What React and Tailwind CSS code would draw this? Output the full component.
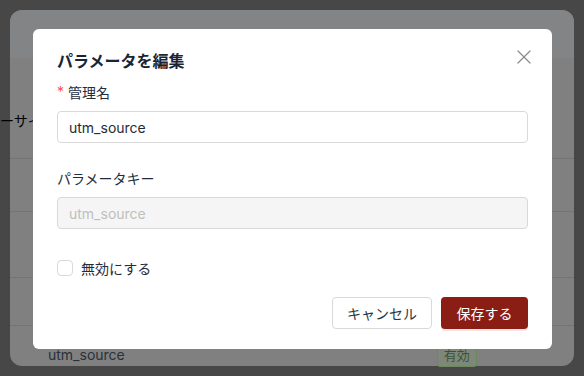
import { X } from "lucide-react"

const font = { fontFamily: "Inter, 'Noto Sans CJK JP', sans-serif" }

function Field({ label, required, value, disabled }) {
  return (
    <div className="flex flex-col">
      <label className="flex items-center h-[22px] text-[14px] text-[#1f2d3d]">
        {required && <span className="text-[#ff4d4f] mr-1 text-[14px] leading-none">*</span>}
        {label}
      </label>
      <div
        className={
          "mt-2 h-[32px] rounded-[4px] border border-[#d9d9d9] px-[11px] flex items-center text-[14px] " +
          (disabled ? "bg-[#f5f5f5] text-[#bfbfbf]" : "bg-white text-[#1e2b3c]")
        }
      >
        {value}
      </div>
    </div>
  )
}

export default function App() {
  return (
    <div className="relative w-[584px] h-[376px] overflow-hidden bg-[#474747] p-[10px]" style={font}>
      {/* page behind the overlay */}
      <div className="h-[356px] rounded-[12px] bg-[#808080] flex flex-col">
        <div className="h-[48px] shrink-0 rounded-t-[12px] bg-[#838486]" />
        <div className="h-[101px] shrink-0 border-b border-[#747474] flex items-start pt-[52px]">
          <span className="-ml-[10px] text-[14px] text-black">ーサイト</span>
        </div>
        <div className="h-[53px] shrink-0 border-b border-[#747474]" />
        <div className="h-[66px] shrink-0 border-b border-[#747474]" />
        <div className="h-[48px] shrink-0 border-b border-[#747474]" />
        <div className="flex-1 flex items-start pt-[18px]">
          <span className="ml-[38px] text-[14px] text-[#29313b]">utm_source</span>
          <span className="ml-[312px] mt-[1px] px-[6px] h-[22px] flex items-center rounded-[3px] border border-[#6a8a5d] bg-[#7e877a] text-[13px] text-[#3a5430]">
            有効
          </span>
        </div>
      </div>

      {/* dialog */}
      <div className="absolute left-[33px] top-[29px] w-[519px] h-[320px] bg-white rounded-[6px] px-6 pt-[20px] flex flex-col">
        <button className="absolute right-[16px] top-[16px] w-[24px] h-[24px] flex items-center justify-center text-[#8c8c8c]">
          <X className="w-[24px] h-[24px]" strokeWidth={1.3} />
        </button>
        <h2 className="h-[24px] flex items-center text-[16px] font-bold text-[#1a2533]">パラメータを編集</h2>

        <div className="mt-2">
          <Field label="管理名" required value="utm_source" />
        </div>
        <div className="mt-6">
          <Field label="パラメータキー" value="utm_source" disabled />
        </div>

        <label className="mt-[28px] h-[22px] flex items-center gap-2 text-[14px] text-[#1f2d3d]">
          <span className="w-[16px] h-[16px] rounded-[4px] border border-[#d9d9d9] bg-white" />
          無効にする
        </label>

        <div className="mt-[18px] flex justify-end gap-[9px]">
          <button className="h-[32px] w-[100px] rounded-[4px] border border-[#d9d9d9] bg-white text-[14px] text-[#2b3644]">
            キャンセル
          </button>
          <button className="h-[32px] w-[87px] rounded-[4px] bg-[#8a1d14] text-[14px] text-white shadow-[0_2px_0_rgba(138,29,20,0.12)]">
            保存する
          </button>
        </div>
      </div>
    </div>
  )
}
